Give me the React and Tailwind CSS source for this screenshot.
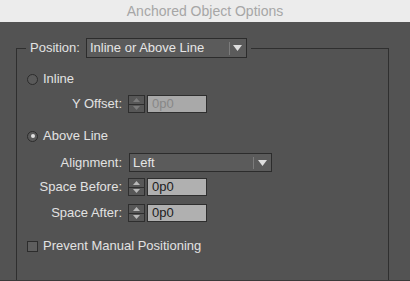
import React from "react";

const font = { fontFamily: '"Liberation Sans", Arial, sans-serif' };

function Spinner({ disabled }) {
  const c = disabled ? "#7a7a7a" : "#b8b8b8";
  return (
    <div className="w-[17px] h-[18px] border border-[#2e2e2e] bg-[#575757] flex flex-col shrink-0">
      <div className="flex-1 flex items-center justify-center border-b border-[#2e2e2e]">
        <svg width="7" height="4" viewBox="0 0 7 4"><polygon points="0,4 7,4 3.5,0" fill={c} /></svg>
      </div>
      <div className="flex-1 flex items-center justify-center">
        <svg width="7" height="4" viewBox="0 0 7 4"><polygon points="0,0 7,0 3.5,4" fill={c} /></svg>
      </div>
    </div>
  );
}

function NumField({ label, disabled }) {
  return (
    <div className="flex items-center h-[18px]">
      <div className="w-[95px] text-right">{label}</div>
      <div className="ml-[6px] flex items-center gap-[2px]">
        <Spinner disabled={disabled} />
        <div
          className={
            "w-[60px] h-[18px] border border-[#2e2e2e] flex items-center pl-[4px] " +
            (disabled ? "bg-[#a9a9a9] text-[#878787]" : "bg-[#b0b0b0] text-[#1c1c1c]")
          }
        >
          0p0
        </div>
      </div>
    </div>
  );
}

function Arrow() {
  return (
    <svg width="9" height="6" viewBox="0 0 9 6">
      <polygon points="0,0 9,0 4.5,6" fill="#dedede" />
    </svg>
  );
}

function Radio({ checked }) {
  return (
    <div className="w-[11px] h-[11px] rounded-full border border-[#2c2c2c] bg-[#5a5a5a] flex items-center justify-center shrink-0">
      {checked && <div className="w-[4px] h-[4px] rounded-full bg-[#e0e0e0]" />}
    </div>
  );
}

export default function App() {
  return (
    <div className="w-[410px] h-[281px] bg-[#535353] flex flex-col overflow-hidden text-[13px] text-[#e2e2e2]" style={font}>
      <div className="h-[22px] bg-[#ececec] flex items-center justify-center text-[#a6a6a6] text-[14px] shrink-0">
        Anchored Object Options
      </div>
      <fieldset className="mt-[16px] ml-[16px] w-[373px] flex-1 border-l border-t border-r border-[#2f2f2f] min-h-0">
        <legend className="ml-[9px] px-[4px]">
          <div className="flex items-center h-[20px]">
            <span className="w-[56px]">Position:</span>
            <div className="w-[161px] h-[20px] border border-[#2c2c2c] bg-[#5b5b5b] flex items-center">
              <span className="pl-[3px] flex-1 text-[#e6e6e6]">Inline or Above Line</span>
              <div className="w-[1px] h-[13px] bg-[#7b7b7b]" />
              <div className="w-[16px] flex items-center justify-center pr-[1px]">
                <Arrow />
              </div>
            </div>
          </div>
        </legend>
        <div className="pl-[10px] flex flex-col">
          <div className="mt-[14px] h-[14px] flex items-center gap-[5px]">
            <Radio />
            <span>Inline</span>
          </div>
          <div className="mt-[9px]">
            <NumField label="Y Offset:" disabled />
          </div>
          <div className="mt-[16px] h-[14px] flex items-center gap-[5px]">
            <Radio checked />
            <span>Above Line</span>
          </div>
          <div className="mt-[10px] flex items-center h-[19px]">
            <div className="w-[95px] text-right">Alignment:</div>
            <div className="ml-[7px] w-[143px] h-[19px] border border-[#2c2c2c] bg-[#5b5b5b] flex items-center">
              <span className="pl-[3px] flex-1 text-[#e6e6e6]">Left</span>
              <div className="w-[1px] h-[12px] bg-[#7b7b7b]" />
              <div className="w-[17px] flex items-center justify-center">
                <Arrow />
              </div>
            </div>
          </div>
          <div className="mt-[6px]">
            <NumField label="Space Before:" />
          </div>
          <div className="mt-[8px]">
            <NumField label="Space After:" />
          </div>
          <div className="mt-[18px] h-[12px] flex items-center gap-[5px]">
            <div className="w-[11px] h-[11px] border border-[#2c2c2c] bg-[#5e5e5e] shrink-0" />
            <span>Prevent Manual Positioning</span>
          </div>
        </div>
      </fieldset>
      <div className="h-[1px] bg-[#3a3a3a] shrink-0" />
    </div>
  );
}
